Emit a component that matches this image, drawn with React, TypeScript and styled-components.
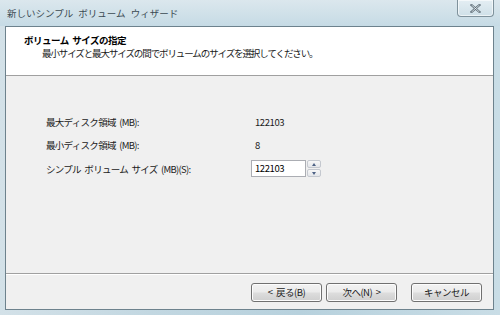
import React from 'react';
import styled, { createGlobalStyle } from 'styled-components';

const GlobalStyle = createGlobalStyle`
  html, body {
    margin: 0;
    padding: 0;
    width: 500px;
    height: 315px;
    overflow: hidden;
    background: #c4d8e2;
  }
  * {
    box-sizing: border-box;
  }
`;

const font = `"Noto Sans CJK JP", "Noto Sans", sans-serif`;

const Window = styled.div`
  width: 500px;
  height: 315px;
  display: flex;
  flex-direction: column;
  font-family: ${font};
  color: #000;
  word-spacing: 2px;
  background: linear-gradient(90deg, #d3e1e8 0%, #c2d7e1 30%, #b7d1dd 60%, #c9dde6 100%);
`;

const TitleBar = styled.div`
  height: 26px;
  display: flex;
  align-items: flex-start;
  justify-content: space-between;
  padding-left: 7px;
  padding-right: 6px;
  background: linear-gradient(180deg, #dbe7ed 0%, #c6dbe5 100%);
`;

const Caption = styled.span`
  margin-top: 6px;
  font-size: 9.5px;
  letter-spacing: 0;
  word-spacing: 3px;
  color: #3a4a52;
`;

const CloseButton = styled.div`
  width: 37px;
  height: 17px;
  display: flex;
  align-items: center;
  justify-content: center;
  border: 1px solid #7f929c;
  border-top: none;
  border-radius: 0 0 4px 4px;
  background: linear-gradient(180deg, #e4eef3 0%, #cfe0e8 100%);
  box-shadow: inset 0 0 0 1px rgba(255, 255, 255, 0.6);
`;

const Client = styled.div`
  flex: 1;
  margin: 0 6px 5px 5px;
  border: 1px solid #6d828d;
  display: flex;
  flex-direction: column;
  background: #f0f0f0;
`;

const Header = styled.div`
  height: 49px;
  background: #fff;
  border-bottom: 1px solid #a0a0a0;
  padding: 7px 0 0 18px;
`;

const HeaderTitle = styled.div`
  font-size: 9.5px;
  font-weight: bold;
  letter-spacing: -0.5px;
  line-height: 13px;
`;

const HeaderSub = styled.div`
  font-size: 9.5px;
  letter-spacing: -1.1px;
  line-height: 13px;
  padding-left: 18px;
  color: #1a1a1a;
`;

const Body = styled.div`
  flex: 1;
  padding: 38px 0 0 40px;
  display: flex;
  flex-direction: column;
  gap: 8px;
`;

const Row = styled.div`
  display: grid;
  grid-template-columns: 207px auto;
  align-items: center;
  height: 15px;
`;

const Label = styled.span`
  font-size: 9.5px;
  letter-spacing: -0.7px;
  color: #1a1a1a;
`;

const Value = styled.span`
  font-size: 9.5px;
  letter-spacing: -0.4px;
  padding-left: 2px;
  color: #1a1a1a;
`;

const Spin = styled.div`
  display: flex;
  align-items: center;
  margin-left: -2px;
`;

const Input = styled.div`
  width: 55px;
  height: 17px;
  border: 1px solid #abadb3;
  background: #fff;
  font-size: 9.5px;
  letter-spacing: -0.4px;
  padding-left: 3px;
  line-height: 15px;
`;

const Arrows = styled.div`
  margin-left: 1px;
  width: 14px;
  height: 17px;
  display: flex;
  flex-direction: column;
  gap: 1px;
`;

const Arrow = styled.div<{ $up?: boolean }>`
  flex: 1;
  border: 1px solid #c4c8cf;
  border-radius: 2px;
  background: linear-gradient(180deg, #f7f7f7, #e4e6ea);
  display: flex;
  align-items: center;
  justify-content: center;
  &::after {
    content: '';
    border-left: 2.5px solid transparent;
    border-right: 2.5px solid transparent;
    ${({ $up }) => ($up ? 'border-bottom: 3px solid #4d6185;' : 'border-top: 3px solid #4d6185;')}
  }
`;

const Footer = styled.div`
  height: 36px;
  border-top: 1px solid #a0a0a0;
  box-shadow: inset 0 1px 0 #fff;
  display: flex;
  align-items: center;
  justify-content: flex-end;
  padding-right: 11px;
  padding-top: 1px;
`;

const Button = styled.div<{ $gap?: number }>`
  width: 71px;
  height: 19px;
  margin-left: ${({ $gap }) => $gap ?? 0}px;
  border: 1px solid #707070;
  border-radius: 3px;
  background: linear-gradient(180deg, #f2f2f2 0%, #ebebeb 48%, #dddddd 52%, #cfcfcf 100%);
  box-shadow: inset 0 0 0 1px #fcfcfc;
  display: flex;
  align-items: center;
  justify-content: center;
  font-size: 9.5px;
  letter-spacing: -0.5px;
  color: #1a1a1a;
`;

const App: React.FC = () => {
  return (
    <>
      <GlobalStyle />
      <Window>
        <TitleBar>
          <Caption>新しいシンプル ボリューム ウィザード</Caption>
          <CloseButton>
            <svg width="11" height="9" viewBox="0 0 11 9">
              <path
                d="M1.5 1 L9.5 8 M9.5 1 L1.5 8"
                stroke="#5d6d77"
                strokeWidth="2.2"
                strokeLinecap="square"
              />
              <path
                d="M1.5 1 L9.5 8 M9.5 1 L1.5 8"
                stroke="#eef3f6"
                strokeWidth="0.8"
              />
            </svg>
          </CloseButton>
        </TitleBar>
        <Client>
          <Header>
            <HeaderTitle>ボリューム サイズの指定</HeaderTitle>
            <HeaderSub>最小サイズと最大サイズの間でボリュームのサイズを選択してください。</HeaderSub>
          </Header>
          <Body>
            <Row>
              <Label>最大ディスク領域 (MB):</Label>
              <Value>122103</Value>
            </Row>
            <Row>
              <Label>最小ディスク領域 (MB):</Label>
              <Value>8</Value>
            </Row>
            <Row>
              <Label>シンプル ボリューム サイズ (MB)(S):</Label>
              <Spin>
                <Input>122103</Input>
                <Arrows>
                  <Arrow $up />
                  <Arrow />
                </Arrows>
              </Spin>
            </Row>
          </Body>
          <Footer>
            <Button>&lt; 戻る(B)</Button>
            <Button $gap={4}>次へ(N) &gt;</Button>
            <Button $gap={14}>キャンセル</Button>
          </Footer>
        </Client>
      </Window>
    </>
  );
};

export default App;
